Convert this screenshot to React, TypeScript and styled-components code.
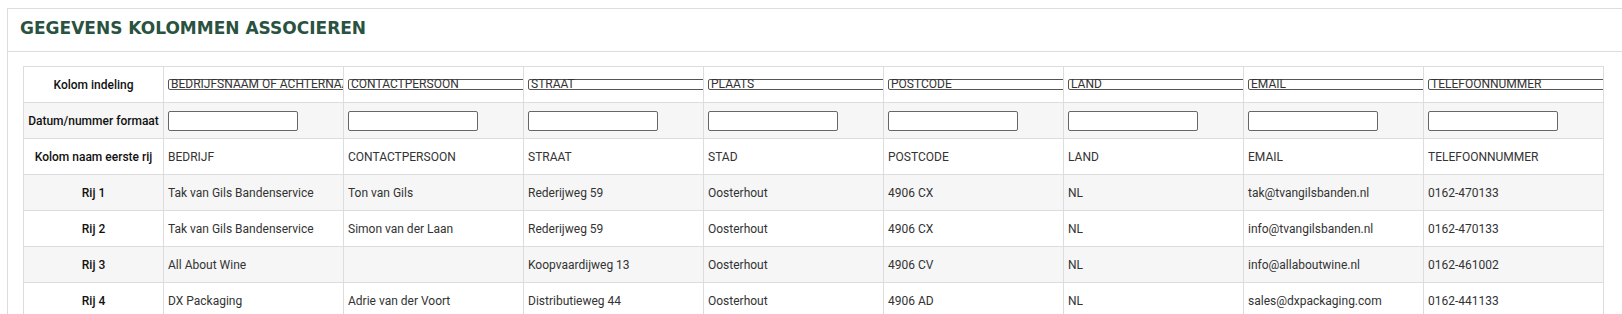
import styled, { createGlobalStyle } from "styled-components";

const GlobalStyle = createGlobalStyle`
  html, body {
    margin: 0;
    padding: 0;
    overflow: hidden;
    background: #ffffff;
    font-family: Roboto, "Liberation Sans", sans-serif;
    color: #333333;
  }
`;

type Column = { mapping: string; firstRow: string };

const columns: Column[] = [
  { mapping: "BEDRIJFSNAAM OF ACHTERNAAM", firstRow: "BEDRIJF" },
  { mapping: "CONTACTPERSOON", firstRow: "CONTACTPERSOON" },
  { mapping: "STRAAT", firstRow: "STRAAT" },
  { mapping: "PLAATS", firstRow: "STAD" },
  { mapping: "POSTCODE", firstRow: "POSTCODE" },
  { mapping: "LAND", firstRow: "LAND" },
  { mapping: "EMAIL", firstRow: "EMAIL" },
  { mapping: "TELEFOONNUMMER", firstRow: "TELEFOONNUMMER" },
];

const rows: string[][] = [
  [
    "Tak van Gils Bandenservice",
    "Ton van Gils",
    "Rederijweg 59",
    "Oosterhout",
    "4906 CX",
    "NL",
    "tak@tvangilsbanden.nl",
    "0162-470133",
  ],
  [
    "Tak van Gils Bandenservice",
    "Simon van der Laan",
    "Rederijweg 59",
    "Oosterhout",
    "4906 CX",
    "NL",
    "info@tvangilsbanden.nl",
    "0162-470133",
  ],
  [
    "All About Wine",
    "",
    "Koopvaardijweg 13",
    "Oosterhout",
    "4906 CV",
    "NL",
    "info@allaboutwine.nl",
    "0162-461002",
  ],
  [
    "DX Packaging",
    "Adrie van der Voort",
    "Distributieweg 44",
    "Oosterhout",
    "4906 AD",
    "NL",
    "sales@dxpackaging.com",
    "0162-441133",
  ],
];

const App = () => {
  return (
    <>
      <GlobalStyle />
      <Panel>
        <PanelHeader>
          <Title>GEGEVENS KOLOMMEN ASSOCIEREN</Title>
        </PanelHeader>
        <PanelBody>
          <Table>
            <colgroup>
              <LabelCol />
              {columns.map((c) => (
                <DataCol key={c.mapping} />
              ))}
            </colgroup>
            <tbody>
              <Row $striped={false}>
                <HeadCell>Kolom indeling</HeadCell>
                {columns.map((c) => (
                  <Cell key={c.mapping}>
                    <ColumnSelect role="combobox" aria-label={c.firstRow}>
                      {c.mapping}
                    </ColumnSelect>
                  </Cell>
                ))}
              </Row>
              <Row $striped>
                <HeadCell>Datum/nummer formaat</HeadCell>
                {columns.map((c) => (
                  <Cell key={c.mapping}>
                    <FormatInput type="text" />
                  </Cell>
                ))}
              </Row>
              <Row $striped={false}>
                <HeadCell>Kolom naam eerste rij</HeadCell>
                {columns.map((c) => (
                  <Cell key={c.mapping}>{c.firstRow}</Cell>
                ))}
              </Row>
              {rows.map((r, i) => (
                <Row key={i} $striped={i % 2 === 0}>
                  <HeadCell>Rij {i + 1}</HeadCell>
                  {r.map((v, j) => (
                    <Cell key={j}>{v}</Cell>
                  ))}
                </Row>
              ))}
            </tbody>
          </Table>
        </PanelBody>
      </Panel>
    </>
  );
};

const Panel = styled.section`
  margin: 8px 0 0 7px;
  border-top: 1px solid #dddddd;
  border-left: 1px solid #dddddd;
  background: #ffffff;
`;

const PanelHeader = styled.header`
  box-sizing: border-box;
  height: 43px;
  display: flex;
  align-items: center;
  padding: 0 12px 4px;
  border-bottom: 1px solid #dddddd;
`;

const Title = styled.h2`
  margin: 0;
  font-family: "DejaVu Sans", sans-serif;
  font-weight: 700;
  font-size: 17px;
  color: #2a5240;
`;

const PanelBody = styled.div`
  padding: 14px 0 0 15px;
`;

const Table = styled.table`
  width: 1581px;
  table-layout: fixed;
  border-collapse: collapse;
  font-size: 12px;
`;

const LabelCol = styled.col`
  width: 140px;
`;

const DataCol = styled.col`
  width: 180px;
`;

const Row = styled.tr<{ $striped: boolean }>`
  height: 36px;
  background: ${(p) => (p.$striped ? "#f6f6f6" : "#ffffff")};
`;

const Cell = styled.td`
  border: 1px solid #dddddd;
  padding: 0 4px;
  overflow: hidden;
  white-space: nowrap;
  color: #333333;
  vertical-align: middle;
`;

const HeadCell = styled(Cell)`
  text-align: center;
  font-weight: 500;
  color: #111111;
  padding: 0 2px;
`;

const ColumnSelect = styled.div`
  box-sizing: border-box;
  width: 200px;
  height: 11px;
  padding: 0 2px;
  border: 1px solid #555555;
  border-radius: 2px;
  background: #ffffff;
  font-size: 12px;
  line-height: 9px;
  color: #333333;
  white-space: nowrap;
`;

const FormatInput = styled.input`
  display: block;
  box-sizing: border-box;
  width: 130px;
  height: 20px;
  margin: 0;
  padding: 0 4px;
  border: 1px solid #666666;
  border-radius: 2px;
  background: #ffffff;
`;

export default App;
